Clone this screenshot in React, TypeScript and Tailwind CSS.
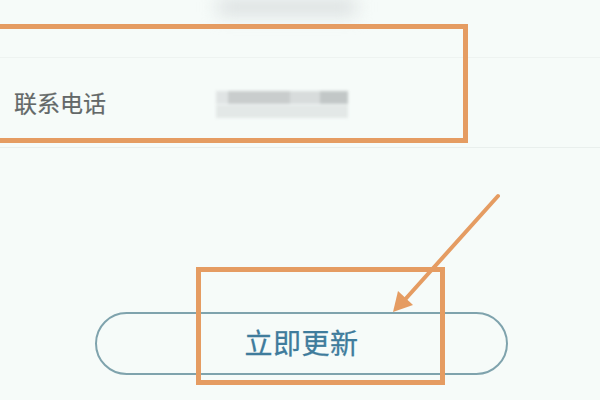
export default function App() {
  return (
    <div className="relative w-[600px] h-[400px] overflow-hidden bg-[#f6fbf9] font-['Liberation_Sans','Noto_Sans_CJK_SC',sans-serif]">
      {/* name row, value blurred */}
      <div className="h-[58px] border-b border-[#eef3f1] pl-[218px]">
        <div className="w-[138px] h-[14px] bg-[#d5dadb] blur-[9px]" />
      </div>
      {/* phone row */}
      <div className="h-[90px] border-b border-[#e9efed] flex items-center pl-[14px] pt-[3px]">
        <span className="w-[202px] text-[23px] leading-none text-[#636868] [-webkit-text-stroke:0.2px_#636868]">联系电话</span>
        <div className="w-[132px] flex flex-col gap-[1px] blur-[1.5px]">
          <div className="h-[13px] flex">
            <div className="w-[12px] bg-[#e0e4e4]" />
            <div className="w-[62px] bg-[#c9cdcd]" />
            <div className="w-[30px] bg-[#d8dcdc]" />
            <div className="w-[28px] bg-[#c2c7c7]" />
          </div>
          <div className="h-[13px] bg-[#e3e8e7]" />
        </div>
      </div>
      {/* update button */}
      <div className="pl-[95px] pt-[164px]">
        <button className="w-[413px] h-[63px] pt-[2px] rounded-full border-2 border-[#7fa3ad] text-[28px] leading-none text-[#3f7c9c] tracking-[0.5px] [-webkit-text-stroke:0.3px_#3f7c9c]">
          立即更新
        </button>
      </div>
      {/* annotations on top of the screenshot */}
      <div className="absolute left-[-10px] top-[24px] w-[478px] h-[119px] border-[5px] border-[#e59c62]" />
      <div className="absolute left-[196px] top-[267px] w-[249px] h-[118px] border-[5px] border-[#e59c62]" />
      <svg className="absolute left-0 top-0" width="600" height="400" viewBox="0 0 600 400" fill="none">
        <path d="M498 196L401 304" stroke="#e59c62" strokeWidth="4" strokeLinecap="round" />
        <path d="M393 312L398 291L413 305Z" fill="#e59c62" />
      </svg>
    </div>
  );
}
